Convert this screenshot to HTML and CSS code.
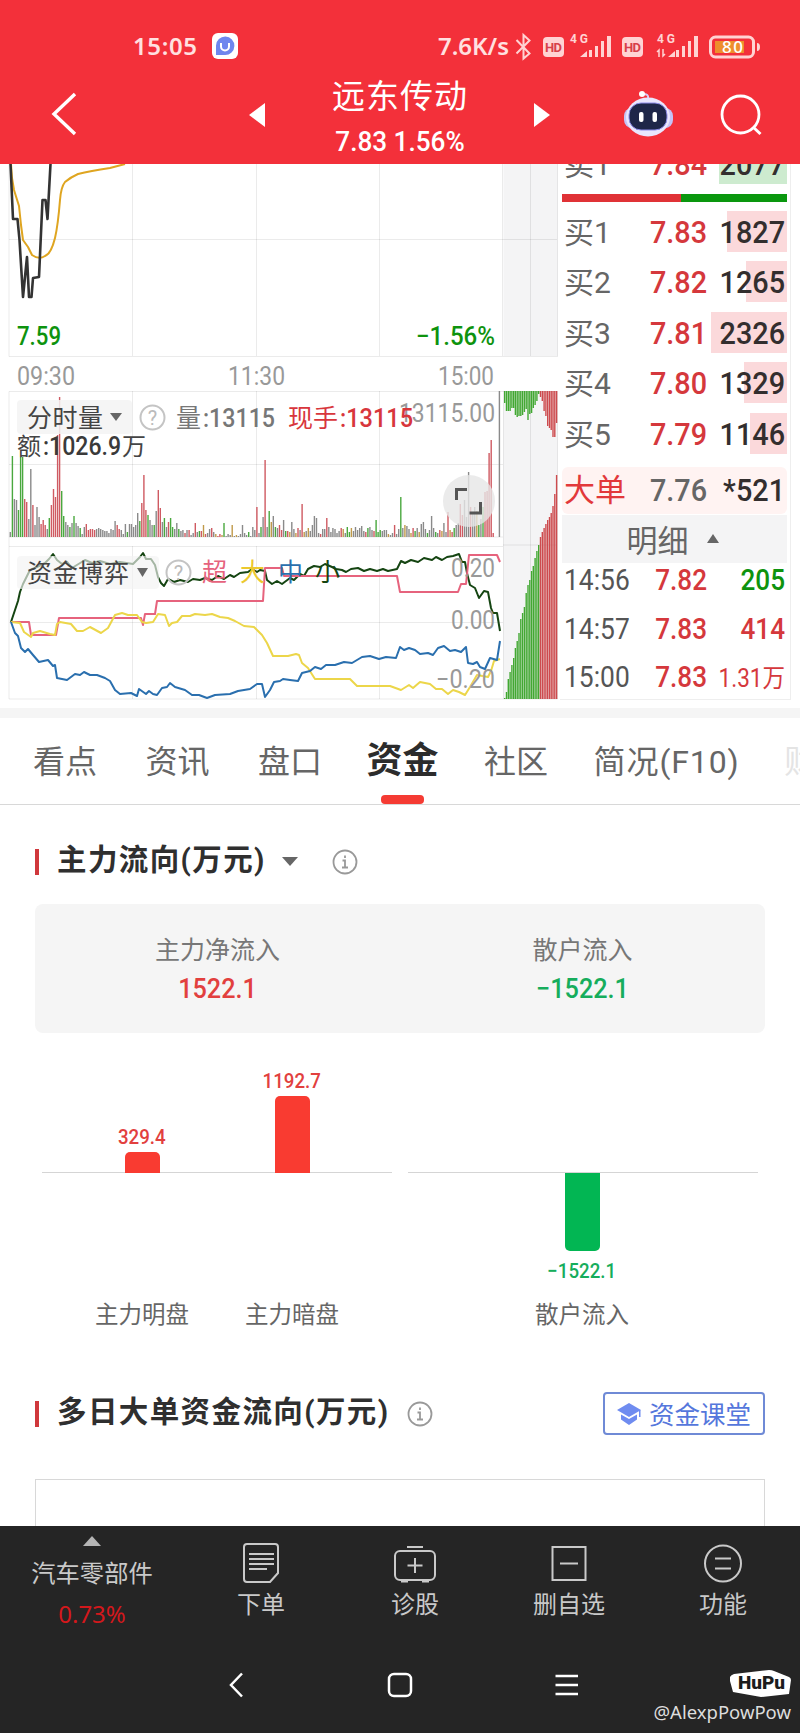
FILE: index.html
```
<!DOCTYPE html>
<html lang="zh-CN">
<head>
    <meta charset="utf-8">
    <title>远东传动</title>
    <link rel="stylesheet" href="styles.css">
</head>
<body>
    <header class="header">
        <div class="status">
            <span class="clock">15:05</span>
            <svg class="app" width="26" height="26" viewBox="0 0 26 26">
                <rect width="26" height="26" rx="6" fill="#fff"/>
                <path d="M4 22V12.500A9.200 9.200 0 1 1 13 22z" fill="#6f86ee"/>
                <path d="M9 10v3.500a4 4 0 0 0 8 0V10" fill="none" stroke="#fff" stroke-width="2"/>
            </svg>
            <span class="speed">7.6K/s</span>
            <svg class="signals" width="260" height="34" viewBox="512 28 260 34" fill="#ffd3d3">
                <path d="M516.500 39l13 13.500-6 5V34l6 5.500-13 13" fill="none" stroke="#ffd3d3" stroke-width="2"/>
                <rect x="543" y="36" width="21" height="20" rx="4"/>
                <text class="hd" x="545" y="51" textLength="17">HD</text>
                <text class="net" x="570" y="42" textLength="18">4G</text>
                <path d="M580 56l7-6v6zM589 49h3v7h-3zM595 45h3v11h-3zM601 40h3v16h-3zM607 35h4v21h-4z"/>
                <rect x="622" y="36" width="21" height="20" rx="4"/>
                <text class="hd" x="624" y="51" textLength="17">HD</text>
                <text class="net" x="657" y="42" textLength="18">4G</text>
                <path d="M668 56l7-6v6zM676 49h3v7h-3zM682 45h3v11h-3zM688 40h3v16h-3zM694 35h4v21h-4z"/>
                <path d="M659 56v-7l-2 2M663 48v7l2-2" fill="none" stroke="#ffd3d3" stroke-width="1.500"/>
                <rect x="710.500" y="36" width="43" height="20" rx="5" fill="none" stroke="#ffd3d3" stroke-width="3"/>
                <rect x="715" y="40" width="29" height="12" fill="#ee8e2c"/>
                <path d="M757 42q3 0 3 4t-3 4z"/>
                <text class="battery" x="722" y="52" textLength="21">80</text>
            </svg>
        </div>
        <div class="titlebar">
            <svg width="280" height="80" viewBox="0 74 280 80">
                <path d="M75 94L54 114l21 20" fill="none" stroke="#fff" stroke-width="3.400"/>
                <path d="M249 115l16-12v24z" fill="#fff"/>
            </svg>
            <div class="stock">
                <div class="name">远东传动</div>
                <div class="quote">7.83 1.56%</div>
            </div>
            <svg width="280" height="80" viewBox="520 74 280 80">
                <path d="M550 115l-16-12v24z" fill="#fff"/>
                <path d="M648 98q1-4-5-4" fill="none" stroke="#d9cdf5" stroke-width="2"/>
                <circle cx="642" cy="94" r="3" fill="#fff"/>
                <rect x="624" y="108" width="49" height="20" rx="8" fill="#c5c3f7"/>
                <ellipse cx="648" cy="117" rx="22" ry="19.500" fill="#e9e6fd"/>
                <rect x="629" y="103" width="38" height="27" rx="12" fill="#1e2648" stroke="#8c8be8"/>
                <rect x="639" y="112" width="4.500" height="10" rx="2" fill="#fff"/>
                <rect x="652.500" y="112" width="4.500" height="10" rx="2" fill="#fff"/>
                <circle cx="740.500" cy="114.500" r="18.500" fill="none" stroke="#fff" stroke-width="2.800"/>
                <path d="M753 127l7.500 7" stroke="#fff" stroke-width="3"/>
            </svg>
        </div>
    </header>

    <section class="market">
        <svg class="charts" width="560" height="544" viewBox="0 164 560 544">
            <rect x="503.500" y="164" width="54" height="192" fill="#f4f4f5"/>
            <rect x="503.500" y="391" width="54" height="308" fill="#f4f4f5"/>
            <path class="grid" d="M9 164V356.500H557.500V164M9 239.500H557M132.500 164V356M256.500 164V356M379.500 164V356M502.500 164V356M530.500 164V356"/>
            <path class="grid" d="M9 391.500H557.500V699H9zM9 464.500H503M9 546.500H503M9 537H503M9 622.500H503M503 545H557M132.500 391V537M256.500 391V537M379.500 391V537M503.500 391V699M530.500 391V699M132.500 546V699M256.500 546V699M379.500 546V699"/>

            <!-- price and average -->
            <path class="line" stroke="#dfa520" d="M11 164L12 178 14 190 19 206 21 225 23 240 28 247 32 255Q39 260 45 256 51 254 55 238 58 225 60 200 61 187 65 182 71 177 78 174 90 171 110 168L125 164"/>
            <path class="line price" d="M10.500 164L13 219H17.500L19.500 240 23 297 27 257 29 297H31.500L33 278 39 277 42.500 200H45.500L47.500 219 50.500 164"/>
            <text class="lbl green" x="17" y="345" textLength="44" lengthAdjust="spacingAndGlyphs">7.59</text>
            <text class="lbl green" x="416" y="345" textLength="79" lengthAdjust="spacingAndGlyphs">−1.56%</text>
            <text class="lbl axis" x="17" y="384.500" textLength="58" lengthAdjust="spacingAndGlyphs">09:30</text>
            <text class="lbl axis" x="228" y="384.500" textLength="57" lengthAdjust="spacingAndGlyphs">11:30</text>
            <text class="lbl axis" x="438" y="384.500" textLength="56" lengthAdjust="spacingAndGlyphs">15:00</text>

            <g id="depth"></g>
            <g id="volume"></g>

            <!-- volume toolbar -->
            <rect x="17" y="400" width="115" height="34" rx="4" fill="#f3f3f3" opacity=".85"/>
            <text class="cn" x="27" y="427" textLength="76">分时量</text>
            <path d="M110 413h12l-6 8z" fill="#666"/>
            <circle class="help" cx="152.500" cy="417.500" r="12"/>
            <text class="q" x="152.500" y="425">?</text>
            <text class="cn muted" x="176" y="427">量</text>
            <text class="lbl muted" x="203" y="427" textLength="72" lengthAdjust="spacingAndGlyphs">:13115</text>
            <text class="cn red" x="288" y="427">现手</text>
            <text class="lbl axis" x="399" y="422" textLength="96" lengthAdjust="spacingAndGlyphs">13115.00</text>
            <text class="lbl red" x="340" y="427" textLength="73" lengthAdjust="spacingAndGlyphs">:13115</text>
            <text class="cn small" x="17" y="455">额</text>
            <text class="lbl dark" x="43" y="455" textLength="78" lengthAdjust="spacingAndGlyphs">:1026.9</text>
            <text class="cn small" x="122" y="455">万</text>
            <circle cx="469" cy="501" r="26" fill="#e6e6e6" opacity=".8"/>
            <path d="M456.500 500v-10.500H467M469.500 513H480.500V502" fill="none" stroke="#555" stroke-width="3"/>

            <!-- fund flow lines -->
            <path class="line" stroke="#154512" d="M11 622L15 610 18 601 20 592 23 584 30 570 37 567 45 563 49 559 53 554 57 560 62 564 67 562 72 568 85 560 92 563 100 561 110 564 120 562 133 564 140 557 143 553 146 559 151 559 155 565 158 577 161 583 164 586 168 579 174 582 180 580 188 582 193 579 200 580 205 578 212 580 218 576 224 579 230 575 234 577 240 573 248 572 252 569 257 572 260 570 265 571 267 580 272 584 277 581 282 584 290 578 294 580 300 574 304 576 308 569 314 566 320 567 325 564 332 567 336 569 342 570 346 572 351 569 358 568 364 571 370 569 377 571 383 569 388 571 397 569 401 561 405 563 411 560 418 562 424 558 432 560 436 557 442 560 447 557 453 556 456 555 459 554 462 562 465 562 467 573 470 585 475 588 479 598 484 591 488 592 491 608 493 613 497 613 500 631"/>
            <path class="line" stroke="#e6637d" d="M11 622H29L31 635H56L59 618H141L143 625 145 614H155L157 601H263L265 568H282L284 576H397L400 592H458L461 584H466L469 555H497L500 562"/>
            <path class="line" stroke="#ecd64a" d="M11 622L20 623 24 632 31 637 33 633 40 631 50 634 55 635 57 624 60 622 71 624 77 631 83 631 90 627 101 633 108 628 115 615 122 613 128 615 137 615 142 622 146 623 153 622 158 614 165 615 169 626 172 623 177 622 182 616 190 616 195 614 205 615 212 614 220 617 228 618 235 621 244 626 254 627 262 635 267 643 273 656H288L296 654 299 655 302 663 308 668 315 679H350L357 686H390L401 690 409 685 413 688 420 682 430 684 436 689 442 689 448 694 453 690 459 692 465 695 470 687 477 675 488 677 491 671 494 661 500 659"/>
            <path class="line" stroke="#2a6fae" d="M11 622L15 633 18 636 21 648 25 652 28 649 33 655 39 662 48 660 53 666 55 665 57 678 67 680 75 674 80 675 84 672 90 675 97 675 105 678 110 681 115 690 120 694 131 693 137 696 139 689 146 694 149 691 153 694 157 695 162 688 167 687 170 683 175 687 185 690 192 695 199 695 207 698 215 695 230 694 238 691 250 689 257 684 262 684 265 697 270 690 274 682 280 681 283 679 290 680 298 681 302 673 310 671 315 667 321 669 326 665 335 665 344 662 352 663 362 657 370 656 379 659 386 657 396 658 400 647 404 650 409 648 415 650 420 654 428 653 433 655 438 648 444 646 450 651 455 650 461 652 466 647 468 663 473 664 477 662 480 667 485 669 490 658 497 660 500 641"/>
            <rect x="17" y="556" width="142" height="33" rx="4" fill="#f3f3f3" opacity=".65"/>
            <text class="cn" x="27" y="582" textLength="102">资金博弈</text>
            <path d="M137 568h11l-5.500 9z" fill="#666"/>
            <circle class="help" cx="178.500" cy="572.500" r="12"/>
            <text class="q" x="178.500" y="580">?</text>
            <text class="cn super" x="202" y="581">超</text>
            <text class="cn large" x="240" y="581">大</text>
            <text class="cn middle" x="278" y="581">中</text>
            <text class="cn retail" x="315" y="581">小</text>
            <text class="lbl axis" x="451" y="577" textLength="44" lengthAdjust="spacingAndGlyphs">0.20</text>
            <text class="lbl axis" x="451" y="629" textLength="44" lengthAdjust="spacingAndGlyphs">0.00</text>
            <text class="lbl axis" x="436" y="688" textLength="59" lengthAdjust="spacingAndGlyphs">−0.20</text>
        </svg>

        <div class="book">
            <div class="level first"><i class="box sell" style="width:68px"></i><span>卖1</span><b>7.84</b><em>2077</em></div>
            <div class="ratio"></div>
            <div class="level"><i class="box" style="width:60px"></i><span>买1</span><b>7.83</b><em>1827</em></div>
            <div class="level"><i class="box" style="width:41px"></i><span>买2</span><b>7.82</b><em>1265</em></div>
            <div class="level"><i class="box" style="width:76px"></i><span>买3</span><b>7.81</b><em>2326</em></div>
            <div class="level"><i class="box" style="width:43px"></i><span>买4</span><b>7.80</b><em>1329</em></div>
            <div class="level"><i class="box" style="width:37px"></i><span>买5</span><b>7.79</b><em>1146</em></div>
            <div class="level big"><span>大单</span><b>7.76</b><em>*521</em></div>
            <div class="detail">明细<svg width="12" height="9"><path d="M0 9h12L6 0z" fill="#666"/></svg></div>
            <div class="tick"><span>14:56</span><b>7.82</b><em class="down">205</em></div>
            <div class="tick"><span>14:57</span><b>7.83</b><em>414</em></div>
            <div class="tick"><span>15:00</span><b>7.83</b><em class="wan">1.31万</em></div>
        </div>
    </section>

    <nav class="tabs">
        <span>看点</span>
        <span>资讯</span>
        <span>盘口</span>
        <span class="active">资金</span>
        <span>社区</span>
        <span class="f10">简况(F10)</span>
        <span class="next">财务</span>
    </nav>

    <main class="content">
        <div class="heading">
            <h2>主力流向(万元)</h2>
            <svg class="caret" width="16" height="9"><path d="M0 0h16l-8 9z" fill="#666"/></svg>
            <svg class="info" width="26" height="26" viewBox="0 0 26 26"><circle cx="13" cy="13" r="11.500"/><path d="M13 6.500v2.500M10.500 11.500H13V18M10 18.500h6"/></svg>
        </div>

        <div class="summary">
            <div><p>主力净流入</p><strong class="in">1522.1</strong></div>
            <div><p>散户流入</p><strong class="out">−1522.1</strong></div>
        </div>

        <div class="flow">
            <div class="plot left">
                <div class="col"><div class="up"><span class="in">329.4</span><i style="height:21px"></i></div><p>主力明盘</p></div>
                <div class="col"><div class="up"><span class="in">1192.7</span><i style="height:77px"></i></div><p>主力暗盘</p></div>
            </div>
            <div class="plot right">
                <div class="col"><div class="up"></div><div class="dn"><i style="height:78px"></i><span class="out">−1522.1</span></div><p>散户流入</p></div>
            </div>
        </div>

        <div class="heading second">
            <h2>多日大单资金流向(万元)</h2>
            <svg class="info" width="26" height="26" viewBox="0 0 26 26"><circle cx="13" cy="13" r="11.500"/><path d="M13 6.500v2.500M10.500 11.500H13V18M10 18.500h6"/></svg>
            <a class="course">
                <svg width="24" height="22" viewBox="0 0 24 22" fill="#6f8cf0"><path d="M12 0l12 7-12 7L0 7z"/><path d="M4 11.500l8 4.500 8-4.500v5L12 22l-8-5.500z"/><path d="M22 7h1.500v7H22z"/></svg>
                <span>资金课堂</span>
            </a>
        </div>
        <div class="frame"></div>
    </main>

    <footer class="footer">
        <div class="menu">
            <div class="sector">
                <svg width="18" height="10"><path d="M0 10h18L9 0z" fill="#b5b5b5"/></svg>
                <span>汽车零部件</span>
                <b>0.73%</b>
            </div>
            <div class="item">
                <svg width="40" height="42" viewBox="0 0 40 42"><path d="M6 2h28q3 0 3 3v26l-8 9H6q-3 0-3-3V5q0-3 3-3z"/><path d="M8 12h25M8 17h25M8 22h25M8 27h18"/></svg>
                <span>下单</span>
            </div>
            <div class="item">
                <svg width="44" height="42" viewBox="0 0 44 42"><path d="M14 5h16"/><rect x="2" y="9" width="40" height="29" rx="5"/><path d="M22 16v15M14.500 23.500h15M8 39.500h7M29 39.500h7"/></svg>
                <span>诊股</span>
            </div>
            <div class="item">
                <svg width="40" height="42" viewBox="0 0 40 42"><rect x="3.500" y="5" width="33" height="33"/><path d="M11 21.500h18"/></svg>
                <span>删自选</span>
            </div>
            <div class="item">
                <svg width="40" height="42" viewBox="0 0 40 42"><circle cx="20" cy="21.500" r="18"/><path d="M12 16.500h16M12 26.500h16"/></svg>
                <span>功能</span>
            </div>
        </div>
        <svg class="keys" width="800" height="30" viewBox="0 1670 800 30">
            <path d="M242 1673.500l-11 11.500 11 11.500"/>
            <rect x="389" y="1674" width="22" height="22" rx="5"/>
            <path d="M555.500 1676h22.500M555.500 1685h22.500M555.500 1694h22.500"/>
        </svg>
        <div class="mark">
            <svg width="62" height="28" viewBox="0 0 62 28"><path d="M1 7q1-2 4-3L40 0q3 0 5 1l15 6q2 1 2 3l-2 14-28 3L4 22 1 11z" fill="#fff"/><text x="9" y="19" textLength="47" lengthAdjust="spacingAndGlyphs">HuPu</text></svg>
            <span>@AlexpPowPow</span>
        </div>
    </footer>

    <script>
        const RED = '#cf5a62', GREEN = '#4aa83f', GRAY = '#8a8a8a', OLIVE = '#c09a4a';

        // one bar per trading minute
        const volume = [
            5,81,38,37,27,80,80,38,35,18,68,32,12,30,20,13,17,12,8,19,32,48,40,102,140,46,21,15,12,10,
            14,21,14,11,9,3,10,13,7,8,8,7,8,9,8,7,6,6,4,8,7,16,12,8,7,3,13,5,13,13,
            10,12,24,16,34,62,27,22,17,12,12,26,47,29,15,19,10,15,19,10,8,14,8,6,7,4,7,7,2,4,
            14,5,6,6,12,3,4,8,9,5,3,1,3,2,14,1,3,2,12,1,2,1,3,12,4,2,5,1,10,7,
            30,4,10,20,77,10,26,15,21,10,9,12,7,17,6,6,5,15,8,4,9,7,33,5,6,9,6,12,21,19,
            4,3,8,8,19,10,5,9,8,4,6,9,8,4,10,5,9,6,10,7,9,11,6,5,9,10,7,6,17,5,
            7,6,7,7,3,2,4,12,3,8,40,9,12,11,8,4,9,6,9,5,13,15,8,4,7,21,9,5,4,7,
            6,14,5,25,7,5,9,12,14,33,22,37,20,65,30,24,30,26,12,18,30,45,46,84,97,4,0,0,146,0
        ];
        const tone = 'kgkkgggrrkkrkkkrrrkgrrrrrggkkgkgkkgkkrrrrrkkkkkkkkkkrrkkkgkkkkkgrrrgkkgkrrkgkrggkkgkkrkr';

        function bar(x, y, w, h, color) {
            return `<rect x="${x.toFixed(1)}" y="${y}" width="${w}" height="${h}" fill="${color}"/>`;
        }

        const colors = { k: GRAY, g: GREEN, r: RED };
        document.getElementById('volume').innerHTML = volume.map((h, i) => {
            let c = i < tone.length ? colors[tone[i]] : [GRAY, GRAY, RED, GRAY, GREEN, GRAY, OLIVE][(i * 5 + h) % 7];
            if ([120, 124, 142, 154, 213, 219].includes(i) || (i > 230 && i < 236)) c = RED;
            if (i === 104 || i === 190 || i === 126) c = GREEN;
            if (i === 223 || i === 238) c = GRAY;
            return bar(9.6 + i * 2.055, 537 - h, 1.4, h, c);
        }).join('');

        // order depth: hanging bars on top, cumulative below
        const top30 = [12,20,20,20,17,17,24,26,25,25,24,21,18,29,23,22,17,14,10,3,6,10,20,25,35,37,39,46,46,32];
        const low30 = [1,7,20,27,34,41,51,58,66,80,86,92,106,114,119,128,133,141,148,154,162,167,171,175,179,182,186,193,205,224];
        let depth = '';
        for (let i = 0; i < 30; i++) {
            const c = i < 20 ? '#42a832' : '#cd4b4e';
            const x = 504 + i * 1.79;
            depth += bar(x, 391, 1.4, top30[i], c) + bar(x, 699 - low30[i], 1.4, low30[i], c);
        }
        document.getElementById('depth').innerHTML = depth;
    </script>
</body>
</html>
```
FILE: styles.css
```
* {
    box-sizing: border-box;
}
body {
    margin: 0;
    width: 800px;
    height: 1733px;
    overflow: hidden;
    background: #fff;
    color: #666;
    font-family: Roboto, "Noto Sans CJK SC", sans-serif;
}
p, h2 {
    margin: 0;
}
i, em {
    font-style: normal;
}

/* header */
.header {
    height: 164px;
    background: #f3303a;
    color: #fff;
}
.status {
    display: flex;
    align-items: center;
    height: 74px;
    padding: 18px 0 0 133px;
    color: #ffe0e0;
    font: 600 24px/30px "Noto Sans", sans-serif;
}
.status > * {
    flex: none;
}
.clock {
    width: 79px;
    letter-spacing: .6px;
}
.speed {
    width: 73px;
    margin-left: 200px;
    white-space: nowrap;
}
.signals {
    margin-left: 1px;
}
.hd {
    font: 700 13px Roboto;
    fill: #d8404a;
}
.net {
    font: 700 12px Roboto;
}
.battery {
    font: 500 17px "Noto Sans";
    fill: #fff;
}
.titlebar {
    display: flex;
    height: 80px;
}
.stock {
    width: 240px;
    text-align: center;
}
.name {
    height: 46px;
    font-size: 33px;
    line-height: 46px;
    letter-spacing: 1px;
}
.quote {
    font-size: 27.500px;
    font-weight: 500;
    line-height: 44px;
    transform: scaleX(.95);
}

/* charts and order book */
.market {
    display: flex;
    height: 554px;
    border-bottom: 10px solid #f5f5f5;
}
.grid {
    fill: none;
    stroke: #000;
    stroke-opacity: .08;
}
.line {
    fill: none;
    stroke-width: 2;
    stroke-linejoin: round;
}
.price {
    stroke: #333;
    stroke-width: 2.6;
}
.lbl {
    font: 500 26px Roboto;
}
.cn {
    font: 25px "Noto Sans CJK SC";
    fill: #444;
}
.small {
    font-size: 24px;
}
.axis {
    font-weight: 400;
    fill: #999;
}
.green {
    fill: #0e930e;
}
.muted {
    fill: #777;
}
.dark {
    fill: #3a3a3a;
}
.red {
    fill: #d8363c;
}
.super {
    fill: #e6637d;
}
.large {
    fill: #ecc92e;
}
.middle {
    fill: #2a6fae;
}
.retail {
    fill: #154512;
}
.help {
    fill: none;
    stroke: #c4c4c4;
    stroke-width: 2;
}
.q {
    font: 20px Roboto;
    fill: #bbb;
    text-anchor: middle;
}
.book {
    width: 231px;
    height: 536px;
    padding: 0 3px 0 2px;
    border-right: 1px solid #eee;
    border-bottom: 1px solid #eee;
    overflow: hidden;
}
.level, .tick {
    position: relative;
    display: grid;
    grid-template-columns: 77px 66px 1fr;
    align-items: center;
    height: 41px;
    margin-bottom: 9.4px;
    padding: 0 2px 0 2px;
    font-size: 32px;
    line-height: 41px;
    white-space: nowrap;
}
.level span {
    font-size: 30px;
}
.level span, .level b, .level em {
    position: relative;
    padding-top: 1px;
}
.level b, .level em, .tick b, .tick em {
    font-weight: 500;
    text-align: right;
    transform: scaleX(.9);
    transform-origin: right;
}
.level b, .tick b {
    color: #d5383c;
}
.level em {
    color: #332e2e;
}
.box {
    position: absolute;
    top: 0;
    right: 0;
    height: 41px;
    background: #fbd9db;
}
.sell {
    background: #cdebcf;
}
.first {
    margin: -21px 0 10px;
}
.ratio {
    height: 8px;
    margin-bottom: 9px;
    background: linear-gradient(90deg, #e03236 53%, #0a970e 53%);
}
.big {
    height: 47px;
    margin: 13px 0 1px;
    border-radius: 6px;
    background: #fff3f2;
}
.big span {
    font-size: 31px;
    color: #e2383a;
}
.big b {
    color: #666;
}
.detail {
    display: flex;
    justify-content: center;
    align-items: center;
    gap: 18px;
    height: 48px;
    margin-bottom: -6px;
    padding-right: 4px;
    background: #f4f4f5;
    font-size: 31px;
}
.tick {
    grid-template-columns: 66px 77px 1fr;
    height: 48.3px;
    margin: 0;
    font-size: 29px;
}
.tick span {
    color: #555;
    transform: scaleX(.91);
    transform-origin: left;
}
.tick em {
    color: #d5383c;
}
.tick .down {
    color: #0e930e;
}
.tick .wan {
    margin-left: -10px;
    padding-top: 3px;
    font-size: 25px;
    font-weight: 400;
}

/* tabs */
.tabs {
    position: relative;
    display: flex;
    align-items: center;
    gap: 48.500px;
    height: 87px;
    padding: 0 0 4px 33px;
    border-bottom: 1px solid #d8d8d8;
    overflow: hidden;
    font-size: 32px;
    white-space: nowrap;
}
.tabs .active {
    position: relative;
    margin: 0 -3px 0 -4px;
    padding-top: 4px;
    font-size: 36px;
    font-weight: 700;
    line-height: 82px;
    color: #2c2c2c;
}
.active::after {
    content: "";
    position: absolute;
    left: 14px;
    bottom: -2px;
    width: 43px;
    height: 9px;
    border-radius: 4px;
    background: #f53b33;
}
.f10 {
    margin-left: -3px;
    letter-spacing: .9px;
}
.next {
    margin-left: -4px;
    color: #e4e4e4;
}

/* fund flow */
.content {
    height: 721px;
    padding: 0 35px;
    overflow: hidden;
}
.heading {
    display: flex;
    align-items: center;
    height: 99px;
    padding-top: 14px;
}
.heading h2 {
    display: flex;
    align-items: center;
    height: 26px;
    border-left: 4px solid #d0383c;
    padding: 0 0 4px 18px;
    font-size: 29.500px;
    font-weight: 700;
    line-height: 22px;
    letter-spacing: 1.4px;
    color: #2f2f2f;
}
.caret {
    margin: 0 34px 0 16px;
}
.info {
    fill: none;
    stroke: #999;
    stroke-width: 1.800;
}
.summary {
    display: flex;
    height: 129px;
    padding-top: 28px;
    border-radius: 8px;
    background: #f5f5f5;
    text-align: center;
}
.summary div {
    width: 50%;
}
.summary p {
    font-size: 25px;
    line-height: 37px;
    color: #777;
}
.summary strong {
    display: block;
    font-size: 28px;
    font-weight: 500;
    line-height: 40px;
    transform: scaleX(.9);
}
.in {
    color: #e2403e;
}
.out {
    color: #16ad5c;
}
.flow {
    display: flex;
    gap: 16px;
    height: 313px;
    padding: 0 7px;
    text-align: center;
}
.plot {
    position: relative;
    display: flex;
    width: 350px;
}
.plot::before {
    content: "";
    position: absolute;
    top: 139px;
    left: 0;
    right: 0;
    height: 1px;
    background: #d5d5d5;
}
.left {
    padding-left: 25px;
}
.right {
    padding-left: 99px;
}
.col {
    position: relative;
    width: 150px;
}
.up {
    display: flex;
    flex-direction: column;
    justify-content: flex-end;
    align-items: center;
    height: 140px;
}
.dn {
    display: flex;
    flex-direction: column;
    align-items: center;
    height: 124px;
}
.up + p {
    padding-top: 124px;
}
.up i, .dn i {
    width: 35px;
    border-radius: 5px 5px 0 0;
    background: #f93b31;
}
.dn i {
    border-radius: 0 0 5px 5px;
    background: #02b653;
}
.up span, .dn span {
    font-size: 21px;
    font-weight: 500;
    line-height: 30px;
    transform: scaleX(.89);
}
.dn span {
    margin-top: 5px;
}
.col p {
    font-size: 23.500px;
    line-height: 36px;
}
.second {
    height: 133px;
    padding-top: 2px;
}
.second .info {
    margin-left: 18px;
}
.course {
    display: flex;
    justify-content: center;
    align-items: center;
    gap: 8px;
    width: 162px;
    height: 43px;
    margin-left: auto;
    border: 2px solid #6f8ad6;
    border-radius: 4px;
    font-size: 25.500px;
    color: #5577dc;
}
.course span {
    margin-top: -3px;
}
.frame {
    height: 60px;
    border: 1px solid #d8d8d8;
}

/* bottom bars */
.footer {
    position: relative;
    height: 207px;
    background: #252525;
    color: #c9c9c9;
    font-size: 24px;
}
.menu {
    display: flex;
    height: 143px;
    padding-top: 10px;
}
.menu > div {
    display: flex;
    flex-direction: column;
    align-items: center;
    width: 154px;
}
.menu .sector {
    width: 184px;
}
.sector span {
    margin-top: 10px;
    font-size: 24.300px;
    line-height: 36px;
}
.sector b {
    margin-top: 7px;
    font: 400 24px/30px "Noto Sans";
    color: #d3181c;
}
.item svg {
    margin-top: 6px;
    fill: none;
    stroke: #c9c9c9;
    stroke-width: 2;
}
.item span {
    margin-top: 3px;
    line-height: 36px;
}
.keys {
    display: block;
    margin-top: 1px;
    fill: none;
    stroke: #fff;
    stroke-width: 2.5;
}
.mark {
    position: absolute;
    right: 9px;
    bottom: 7px;
    display: flex;
    flex-direction: column;
    align-items: flex-end;
    font: 18.500px/28px "Noto Sans";
    color: #ddd;
}
.mark text {
    font: 900 18px Roboto;
    fill: #1c1c1c;
}
```
